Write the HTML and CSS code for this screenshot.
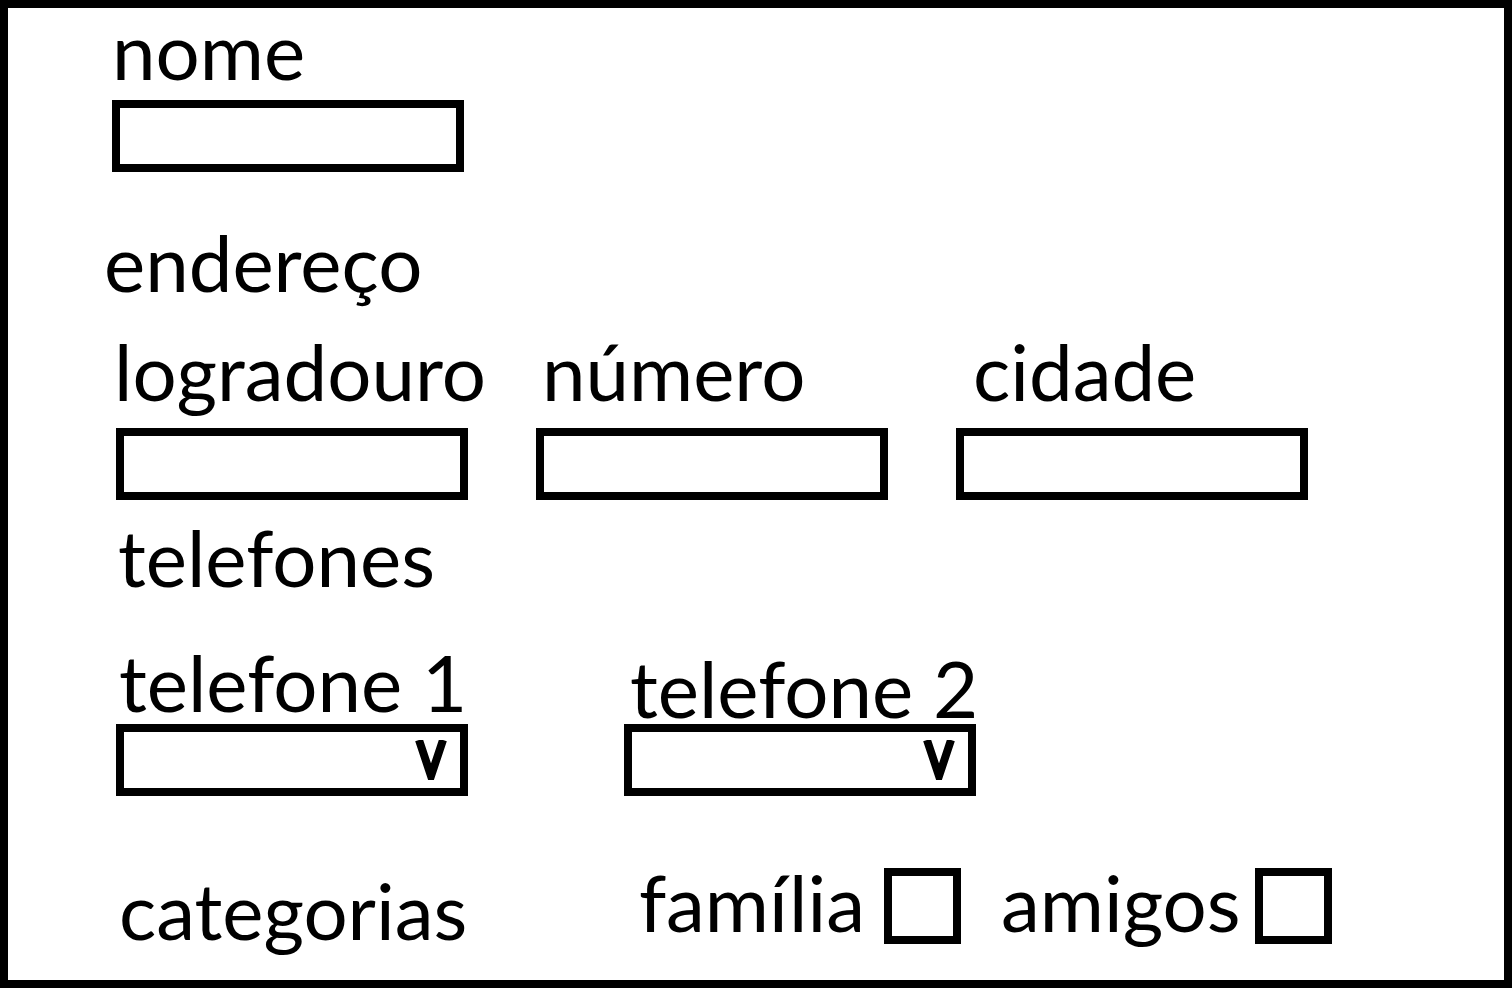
FILE: index.html
```html
<!DOCTYPE html>
<html lang="pt">
<head>
<meta charset="utf-8">
<title>Contato</title>
<link rel="stylesheet" href="styles.css">
</head>
<body>
<div class="frame">
  <div class="label nome-label">nome</div>
  <div class="box nome-box"></div>

  <div class="label section endereco">endereço</div>
  <div class="row addr">
    <div class="field">
      <div class="label lbl-log">logradouro</div>
      <div class="box"></div>
    </div>
    <div class="field">
      <div class="label lbl-num">número</div>
      <div class="box"></div>
    </div>
    <div class="field">
      <div class="label lbl-cid">cidade</div>
      <div class="box"></div>
    </div>
  </div>

  <div class="label section telefones">telefones</div>
  <div class="row phones">
    <div class="field">
      <div class="label lbl-t1">telefone 1</div>
      <div class="box select s1"><svg class="caret" viewBox="0 0 34 40" width="34" height="40"><path d="M5 0 L17 36 L29 0" fill="none" stroke="#000" stroke-width="8"/></svg></div>
    </div>
    <div class="field">
      <div class="label lbl-t2">telefone 2</div>
      <div class="box select s2"><svg class="caret" viewBox="0 0 34 40" width="34" height="40"><path d="M5 0 L17 36 L29 0" fill="none" stroke="#000" stroke-width="8"/></svg></div>
    </div>
  </div>

  <div class="row cats">
    <div class="label lbl-cat">categorias</div>
    <div class="check-group fam">
      <span class="label cb-label">família</span>
      <span class="check"></span>
    </div>
    <div class="check-group ami">
      <span class="label cb-label">amigos</span>
      <span class="check"></span>
    </div>
  </div>
</div>
</body>
</html>
```

FILE: styles.css
```css
html, body {
  margin: 0;
  padding: 0;
  background: #fff;
}

.frame {
  width: 1512px;
  height: 988px;
  box-sizing: border-box;
  border: 8px solid #000;
  background: #fff;
  display: flex;
  flex-direction: column;
  align-items: flex-start;
  overflow: hidden;
}

.label {
  font-family: Lato, "Open Sans", sans-serif;
  font-size: 78px;
  line-height: 80px;
  height: 80px;
  color: #000;
  white-space: nowrap;
}

.box {
  width: 352px;
  height: 72px;
  box-sizing: border-box;
  border: 8px solid #000;
  background: #fff;
}

.nome-label {
  margin: 2px 0 0 104px;
}

.nome-box {
  margin: 10px 0 0 104px;
}

.endereco {
  margin: 50px 0 0 96px;
}

.row {
  display: flex;
  align-items: flex-start;
}

.field {
  width: 352px;
  flex: none;
  display: flex;
  flex-direction: column;
  align-items: flex-start;
}

.addr {
  margin: 29px 0 0 108px;
  gap: 68px;
}

.addr .box {
  margin-top: 17px;
}

.lbl-log { margin-left: -2px; }
.lbl-num { margin-left: 6px; }
.lbl-cid { margin-left: 17px; }

.telefones {
  margin: 17px 0 0 110px;
}

.phones {
  margin: 45px 0 0 108px;
  gap: 156px;
}

.lbl-t1 { margin-left: 3px; }
.lbl-t2 { margin: 6px 0 0 6px; }

.s1 { margin-top: 2px; }
.s2 { margin-top: -4px; }

.select {
  display: flex;
  align-items: center;
  justify-content: flex-end;
  padding-right: 12px;
}

.caret {
  display: block;
}

.cats {
  margin: 66px 0 0 111px;
}

.lbl-cat {
  margin-top: 8px;
  width: 520px;
}

.check-group {
  display: flex;
  align-items: flex-start;
}

.fam {
  width: 362px;
}

.fam .cb-label {
  width: 245px;
}

.ami .cb-label {
  width: 254px;
}

.check {
  display: block;
  flex: none;
  width: 77px;
  height: 76px;
  box-sizing: border-box;
  border: 8px solid #000;
  margin-top: 6px;
}
```
